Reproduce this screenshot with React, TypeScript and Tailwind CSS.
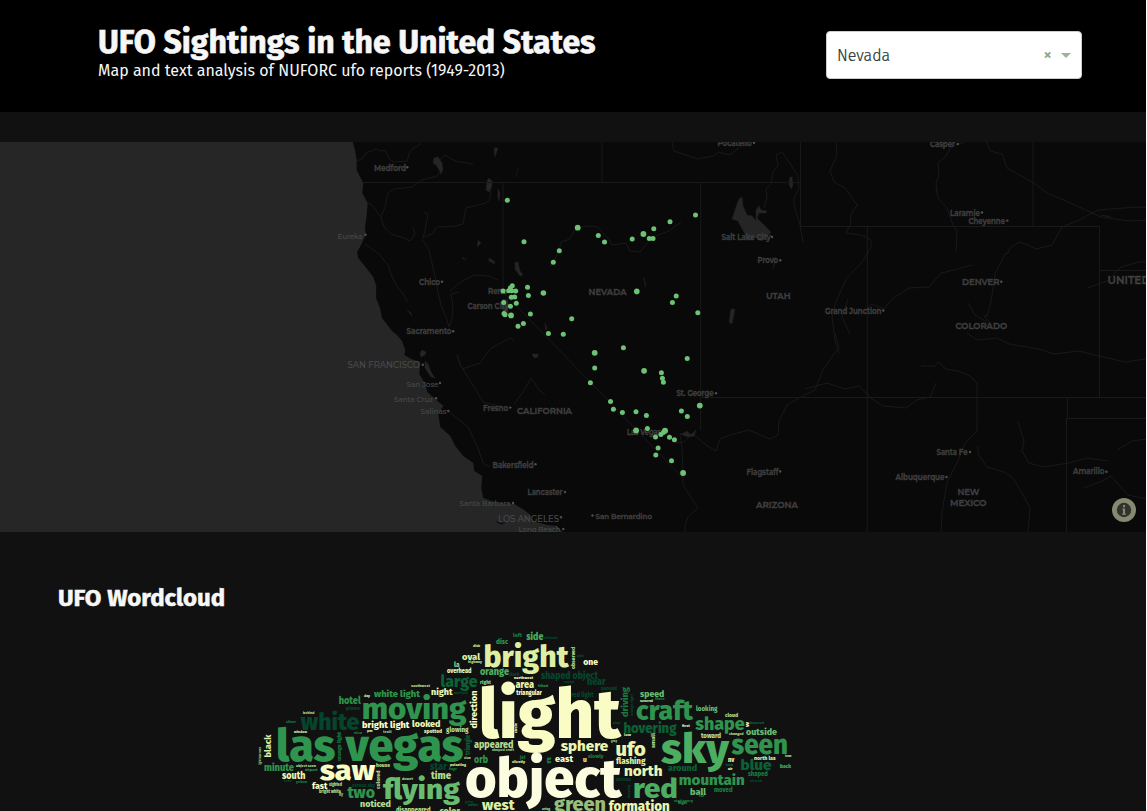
import React from "react";

type Label = [text: string, x: number, baseline: number, width: number, size: number, weight: number];
type Word = [text: string, x: number, baseline: number, width: number, size: number, color: string];

const SIGHTINGS: [number, number, number?][] = [
  [507.3, 200.3], [524, 241.7], [577.7, 227.7, 2.9], [598.3, 235.5], [604.5, 242], [559.3, 250.7], [553.3, 262.3],
  [512.3, 285.7], [510.3, 287.9], [503, 291], [508.7, 290.7], [511.7, 290.7], [515.7, 291], [511.3, 297.2], [514.7, 297],
  [527.5, 287.3], [528.4, 295.4], [543.4, 293, 2.8], [503.7, 302.5], [516.3, 303.3], [510.4, 306.3], [504, 313.5],
  [505, 314.7], [511, 315.4, 2.9], [530.4, 314], [523.4, 323.6], [518, 326.3], [571.7, 318.8], [548.4, 333.5],
  [563.3, 334.2], [695.5, 215], [670, 221.7], [653.8, 228.7], [643.4, 234, 2.9], [649.3, 238.5], [653, 238.5], [632.2, 239],
  [636.8, 291.4, 2.8], [676.2, 296], [672.4, 302.6], [697.8, 312.7], [594.7, 352.8, 2.9], [594.7, 368], [590.4, 382.8],
  [623.4, 347.8], [687.2, 358.6], [644.1, 370.8, 2.9], [661.4, 372.7], [662.4, 378.3], [663.4, 382.3], [610.5, 401.5],
  [613.4, 409.3], [622.4, 412.4], [636, 411.8], [646.4, 415.4], [681.4, 411.1], [687.3, 416.5], [699.8, 405.6, 2.9],
  [647.4, 428.5], [636.1, 430.5, 2.9], [655.5, 437], [660.9, 434.4], [663.3, 432.5], [665, 430.8, 3], [669.5, 437.2],
  [674.4, 439.8], [658.1, 448], [655.8, 455], [671.5, 460.8], [683.1, 473, 2.9],
];

const LABELS: Label[] = [
  ["Medford", 374, 171, 32, 8.2, 600], ["Eureka", 337.5, 238.5, 25, 7.8, 500], ["Chico", 419, 285, 21, 8.2, 600],
  ["Reno", 488, 293.5, 19, 8.2, 600], ["Carson City", 467.5, 309.3, 41, 8.2, 600], ["Sacramento", 406.5, 334.3, 45, 8.2, 600],
  ["SAN FRANCISCO", 347.5, 368.3, 72.5, 8.6, 500], ["San Jose", 406.5, 386.5, 32, 8, 500], ["Santa Cruz", 394, 401.5, 39, 7.8, 500],
  ["Salinas", 420.5, 414, 26, 7.8, 500], ["Fresno", 483, 411, 25, 8.2, 600], ["CALIFORNIA", 517, 413.5, 55, 9.2, 600],
  ["Bakersfield", 492.5, 467.7, 41, 8.2, 600], ["Lancaster", 527.5, 495, 35, 8.2, 600], ["Santa Barbara", 459.5, 506, 51, 7.8, 500],
  ["LOS ANGELES", 498, 521.5, 61, 9, 500], ["Long Beach", 518.5, 532.3, 42, 8, 500], ["San Bernardino", 595.5, 519, 56.5, 8, 600],
  ["NEVADA", 588.5, 294.5, 38, 9.2, 600], ["UTAH", 766, 298.7, 24.5, 9.2, 600], ["Pocatello", 717.5, 146, 34, 8.2, 600],
  ["Salt Lake City", 721.5, 240.3, 49, 8.4, 600], ["Provo", 757.5, 262.8, 20.5, 8.2, 600], ["Grand Junction", 825, 313.5, 56.5, 8.2, 600],
  ["St. George", 676.5, 396.2, 37, 8.2, 600], ["Las Vegas", 627, 435.2, 34, 8.2, 600], ["Flagstaff", 746.5, 474.5, 32, 8.2, 600],
  ["ARIZONA", 756, 507.7, 42, 9.2, 600], ["Casper", 930, 147, 25, 8.2, 600], ["Laramie", 950, 215.5, 30, 8.2, 600],
  ["Cheyenne", 968.5, 223.5, 36.5, 8.2, 600], ["DENVER", 962, 284.5, 37.5, 9, 600], ["COLORADO", 955.5, 328.5, 51.5, 9.2, 600],
  ["UNITED STATES", 1107.5, 283.7, 86, 10.6, 600], ["Santa Fe", 936.5, 455, 31, 8.2, 600], ["Albuquerque", 895.5, 479.7, 49, 8.2, 600],
  ["NEW", 957.5, 494.7, 22, 9.2, 600], ["MEXICO", 950, 505.5, 36.5, 9.2, 600], ["Amarillo", 1073, 474.3, 31.5, 8.2, 600],
];

const CITY_DOTS: [number, number][] = [
  [407.3, 167.3], [365.5, 234.8], [442, 281.7], [453.2, 331.3], [422.8, 364.8], [440, 383], [436, 398.3], [448.3, 411],
  [510.3, 407.6], [535.5, 464.2], [565, 492], [513, 503], [561, 517.2], [563.3, 529], [592.5, 515.5], [754, 142.8],
  [772, 237], [780.3, 260.2], [883.3, 310.5], [716, 393.3], [780.2, 471.5], [957.8, 144], [982, 212.5], [1007.3, 220.6],
  [1001.3, 281.7], [970, 452], [946.5, 477], [1106.5, 471.8],
];

const C = {
  cream: "#fcfde0", pale: "#f9fcc4", yellow: "#eaf5b0", lime: "#dcefa4", light: "#b4dd91", sage: "#8ccc83",
  mint: "#68bc70", grass: "#4cae60", green: "#2f944d", forest: "#187a40", deep: "#0b6136", dark: "#05452d",
};

const WORDS: Word[] = [
  ["light", 478.7, 738, 142, 68, C.pale], ["object", 465, 796.8, 156.5, 55, C.cream], ["las vegas", 276, 761, 187.5, 45, C.green],
  ["sky", 661, 762.7, 68, 42, C.grass], ["seen", 731.5, 754, 56.5, 28, C.green], ["bright", 483.5, 666.7, 85, 30, C.lime],
  ["craft", 636, 720, 57, 27, C.green], ["moving", 361.7, 719, 105, 31, C.green], ["white", 300.7, 729.7, 58.7, 23.5, C.dark],
  ["saw", 319.7, 780, 55.6, 28.5, C.pale], ["flying", 383, 798.7, 77, 28, C.mint], ["red", 633, 797.7, 45, 27, C.grass],
  ["ufo", 615.5, 755.7, 30.3, 20.5, C.yellow], ["shape", 695.2, 730, 49.6, 18, C.green], ["mountain", 678.8, 785, 66, 15, C.green],
  ["blue", 740.5, 770, 31, 15, C.deep], ["hovering", 623.5, 733, 53, 14.5, C.deep], ["north", 624, 776, 38.6, 14.2, C.yellow],
  ["formation", 608.7, 811, 61, 14.8, C.yellow], ["green", 554, 811, 52, 19.5, "#98bd7a"], ["west", 482, 809.5, 32.6, 15, C.lime],
  ["sphere", 560.7, 750.7, 47.5, 14, C.yellow], ["large", 440.6, 686.7, 37, 15.5, C.deep], ["two", 347.4, 798, 27.5, 16, C.green],
  ["appeared", 474, 748.3, 39.5, 10, C.light], ["orb", 474, 763, 14, 10, C.green], ["east", 555, 762, 18, 9.5, C.pale],
  ["u", 583, 762, 3.8, 7, C.lime], ["slowly", 588, 758, 15.5, 6, C.forest], ["orange", 480, 675, 29, 10, C.grass],
  ["oval", 462, 660, 18, 9.5, C.lime], ["la", 454, 667, 5.5, 7.5, C.sage], ["overhead", 447, 673, 24.5, 6.5, C.yellow],
  ["disc", 496, 644, 12, 7.6, C.green], ["left", 513, 637, 9, 5, C.forest], ["side", 526.3, 640, 17, 10, C.grass],
  ["altitude", 544, 639, 14, 3.5, C.dark], ["one", 583.3, 665, 14.7, 9.5, C.pale], ["shaped object", 541, 679.3, 57, 10.5, C.dark],
  ["near", 587, 685, 18.7, 10.5, C.dark], ["second", 601, 689.5, 16, 5, C.dark], ["red light", 571, 697, 22.5, 7.5, C.dark],
  ["area", 515.5, 688, 18.5, 10, C.yellow], ["triangular", 516.3, 694.8, 25.5, 6.8, C.pale], ["tilted", 538, 687, 10, 3.2, C.green],
  ["northwest", 514, 678.5, 19, 3.5, C.pale], ["dark", 509, 676, 10.5, 6, C.dark], ["right", 480, 684, 11, 5.5, C.sage],
  ["night", 431, 695, 21.5, 9.5, C.yellow], ["multiple", 454, 694, 14, 4, C.dark], ["disk", 473, 647, 7, 3.4, C.lime],
  ["highway", 468, 663, 14, 3.5, C.light], ["pink", 577, 657, 7, 3, C.dark], ["round", 564, 683, 10, 3, C.dark],
  ["white light", 374, 697, 46, 9.5, C.green], ["southwest", 411, 687, 19, 3.5, C.light], ["day", 364, 697, 6, 3.8, C.lime],
  ["hotel", 338.7, 704, 22, 10, C.green], ["plane", 346, 710, 14, 6, C.dark], ["bright light", 362, 728, 47.5, 9.6, C.pale],
  ["looked", 412, 727, 28.5, 9.6, C.yellow], ["spotted", 424, 732.5, 18, 5.2, C.yellow], ["glowing", 446, 732, 22.5, 7.4, C.light],
  ["behind", 303, 714, 11.5, 3.7, C.light], ["silver", 286, 723, 10, 4, C.forest], ["window", 294, 733, 13, 3.7, C.lime],
  ["view", 354, 734, 8, 4, C.forest], ["pm", 367, 732, 5.5, 4, C.lime], ["trail", 383, 733, 8.5, 4, C.sage],
  ["minute", 264, 771, 30, 10, C.green], ["object seen", 296, 767, 20, 3.7, C.light], ["airport", 305, 770.5, 12.5, 4, C.green],
  ["south", 282, 779, 23.3, 10, C.yellow], ["house", 376, 767, 14, 6, C.light], ["fast", 312, 789, 15.5, 9.5, C.pale],
  ["home", 284, 782, 8, 3.5, C.dark], ["yellow", 296, 783, 11, 4, C.forest], ["sighted", 329, 785.5, 13, 4.4, C.light],
  ["across sky", 352, 787, 23, 5.6, C.dark], ["bright white", 319, 792.5, 22, 4.4, C.light], ["fly", 339, 796, 4, 4.5, C.sage],
  ["noticed", 360, 807, 31, 9.5, C.light], ["disappeared", 396, 812, 34.5, 7.6, C.light], ["desert", 402, 780, 11, 3.8, C.light],
  ["color", 439.5, 813.5, 20.5, 9.5, C.light], ["time", 431, 779, 20, 10, C.light], ["star", 430, 770, 17, 10, C.dark],
  ["pulsating", 450, 766, 16, 3.7, C.lime], ["huge", 449, 770, 8, 3.6, C.forest], ["slow", 464, 759, 6.5, 3.6, C.light],
  ["shaped craft", 492, 751, 22, 3.6, C.sage], ["silently", 512, 763, 13, 4, C.lime], ["jet", 520, 758.5, 5.5, 5, C.forest],
  ["going", 465, 803, 8, 3.5, C.dark], ["another", 468, 806, 10, 3.5, C.deep], ["oring", 542, 810, 8, 3.6, C.light],
  ["speed", 640, 697, 24.3, 9.2, C.mint], ["several", 640, 702, 13, 3.8, C.lime], ["flashing", 616, 764, 29.5, 8, C.lime],
  ["looking", 696, 711, 21.5, 7.8, C.mint], ["cloud", 725, 717, 13, 5, C.light], ["hovered", 750, 724, 14, 4, C.deep],
  ["changed", 729, 735, 14.5, 4, C.light], ["outside", 746, 735, 31, 9, C.mint], ["toward", 701, 738, 20, 6.8, C.light],
  ["first", 682, 727, 8, 3.8, C.lime], ["gray", 611, 742, 6, 3.4, C.sage], ["star", 613, 724, 8, 4, C.dark], ["low", 624, 736, 7, 3.5, C.lime],
  ["around", 668, 771, 29, 9.2, C.deep], ["nv", 728, 762, 6.3, 7, C.yellow], ["air", 728, 770, 4.5, 3.8, C.pale], ["beam", 726, 766, 7, 3.2, C.deep],
  ["north las", 754, 760, 21.5, 5.4, C.lime], ["town", 785, 757, 6.5, 3.5, C.light], ["back", 780, 768, 11, 5.2, C.grass],
  ["shaped", 748, 775.5, 19.8, 6.8, C.forest], ["streak", 750, 782, 12, 3.6, C.dark], ["moved", 714, 792, 18.5, 7, C.forest],
  ["ball", 690, 795, 16, 9.6, C.mint], ["far", 699, 797, 5.5, 3.5, C.forest], ["across", 616, 781, 15, 5, C.dark],
  ["stationary", 674, 801.5, 19, 4.2, C.forest], ["flight", 678, 804, 9, 3.6, C.green], ["flare", 655, 700, 10, 4, C.forest],
];

const VERTICAL_WORDS: Word[] = [
  ["black", 271, 757.5, 23, 9, C.lime], ["light blue seen", 261, 765, 18, 3.5, C.light], ["orange light", 340.5, 761, 29, 6, C.forest],
  ["colored", 380, 789, 18.5, 5.5, C.light], ["direction", 477.3, 728.5, 38, 9, C.pale], ["triangle", 470, 755, 20, 6.2, C.deep],
  ["circle", 517, 733, 10, 4, C.pale], ["observed", 575, 669, 22, 5.2, C.light], ["fl", 550.5, 764, 7, 6, C.forest],
  ["driving", 627.5, 717, 30, 9, C.forest], ["orange light", 632.5, 716, 22, 3.6, C.dark], ["small", 654.8, 748, 15, 6, C.light],
  ["moving", 629.5, 798, 13, 4, C.dark], ["w", 749, 727, 5, 5, C.pale],
];

const RIVERS = [
  "M357 161l6-3 3-5 10-4 5 2 4-1 4 9 5 3 13-1 3-10 10-7V142", "M368 203l5 3 8 11 4-10 3-14 6-4 18-2 10-7 15-4 6-7M440 160l5-5 10 6 18 3",
  "M381 217l3 10 7 7 13 4 6 3 5-7-2-7", "M365 244l14 10 9 11 4 12 4 8 7 9 5 8", "M423 238l2-8 3-16-4-2M423 237l9-3 5-7 19-1 7-2 3-16 20-5 4-4 1-13",
  "M422 239l7 11 3 13 4 18 2 12 3 12 5 12 3 10 3-8 1-12-2-13 8-2", "M450 291l9-8 15-8 15 1 9 4",
  "M550 267l9-16 2-9 9-3 4-8 4-3 10-2 10 1 6 7 6 7 2 4 14-2 4 8 10 1 7-9 11-8 11-4 12-9",
  "M672 142l2 9 24 8 15-3 5-4 12 3 10-8", "M764 208l3-11-1-8 5-5 2-12 5-7-2-10 6-3 7 10 5 8 4 5 0 5 1 9-5 9 0 7 3 10 3 10 3 17",
  "M836 142l1 13-7 16 4 11 11 6 12 17-6 9-1 11-4 8 15 2 10 5 0 7-8 14-17 18-10 23-4 15 3 24 4 12",
  "M937 193l-1-10 3-8-1-12 8-7 6-10 16-5 19 1 3 9 12 3 5 14 27 15 13 10 19 8 35 16 28 4 18-1",
  "M936 187l2 11 9 10 6 17 4 6-1 20", "M867 308l5-4 12 5 8-10 17-11 20-1 12-14 13-3 18-5",
  "M990 323l-6-7 3 0 4-14 4-28 10-20 3-1 2-5 9-6 9 3 8 4 16-4 10-18 17-7 19-10 39-3 19 1",
  "M968 303l7 12 13 8M1087 288l20-7 14-14 18-5 8 0", "M850 334l-8-17 6-18M835 333l4 14-5 7-11 16-8 20-14 7-14 8-8 16-1 14-8 4-21-9-19 5-10 4-4 12-10-6-14-12-8 9-9 1",
  "M805 389l22-6 18 6 14-3 13 13 11 7 23 2 11-8 13-3 6-14", "M921 366h14l3-4 8 7 12 2 12 5 7 7v48l-12 12-8 20-10 19-5 31-1 19-4 11",
  "M967 333l10 7 20-2 12 6 30 5 15 5 25-3 20 5 26 6 20-3 12 2", "M1018 422l6 19-2 10 7 12 14 4 26-4 18-5 21 3",
  "M978 446v8l9 13 17 5 9 6 10 17 7 13-2 24", "M1084 488l18-7 9-5 17 19 19 4M1117 450l15-9 15-2",
  "M680 435l2 13 1 25 0 12 7 11 8 12-10 9-3 8v7", "M448 411l20 16 10 21 5 15 7 4", "M461 367l-4-12 4 11 13 21 9 15 8 2 8 2",
  "M462 369l18-6 10-14 20-11 4 2M514 404l9-12 8-14 9 13 5 4",
];

const LAKES = [
  "M737 204l2-5 3-2 1 9 4 9 5 1 4 5 0-11 3-4 2 4 6 1-1 2-7 0-2 5 6 6 8 8-5 6-5 3-6-4-3 3-5 0-3-8-3-5-3-6-6-2z",
  "M487 181l2-3 3 3v5l-3 6-3-2zM434 158l4-1 4 6 1 6-2 5-4-8-4-3zM494 148l4 0-3 9zM498 189l2 4-1 8-1-4z",
  "M515 262l3 0 2 9 3 4-3 1-5-7zM503 299l5 1 0 15-5-4-2-6z", "M790 177l2 0 1 8-2 4-2-5zM731 309l4 0-3 15-3-2z",
  "M422 350l4 2-1 3-4 2-1-4zM425 361l3 3 3 8 4 6-4-1-6-9z", "M478 240l3 3-4 4M462 257l4 3-3-1M489 258l5 3 1 3-6-3z",
  "M775 257l-2 12 2-7zM532 354l6 0 0 3-4 1zM545 323l2 5-1 3zM644 277l2 10-1-3zM680 434l4-1 3-2 4 4 5-5-2 6-6 1z",
  "M518 167l-2 10M407 310l4 3 1 3zM1101 215l10 2z",
];

const CALIFORNIA_COAST =
  "M352.7 142l2.3 8 1.7 10v10l6.6 13-1 10 5.4 10-1 12-1.7 13 .7 7-5.7 12-3 5 1.3 6 8 10 7 9 3 9-.3 12 4 10 2 10 10 13 5 4 5 6 3.3 9-1 5 7 4 9 3-1 12 6 10 2 8 8 7 8 7-5 8 2 13 10 9 5 10 8 10 10 7 1 8 8 5-1 12 2 10 14 5 17 1 10 6 6 5 2 6 15 4 10 1 4 5 7 3H1146V142z";

function Header() {
  return (
    <header className="flex h-28 justify-between bg-black pt-[23px] pr-16 pl-[98px] text-[#f7f7f7]">
      <div className="w-[520px] whitespace-nowrap">
        <h1 className="text-[32px] leading-[38px] font-bold [-webkit-text-stroke:0.6px_#f7f7f7]">UFO Sightings in the United States</h1>
        <p className="mt-px text-[16px] leading-[18px]">Map and text analysis of NUFORC ufo reports (1949-2013)</p>
      </div>
      <div className="mt-2 flex h-12 w-64 items-center rounded border border-[#ccc] bg-white pr-[10px] pl-[10px]">
        <span className="flex-1 pt-px text-[16px] font-light text-[#1f302f] [-webkit-text-stroke:0.2px_#1f302f]">Nevada</span>
        <button aria-label="Clear" className="w-[9px] text-[16px] leading-none font-semibold text-[#93a690]">×</button>
        <span className="ml-[9px] border-x-[5px] border-t-[5px] border-x-transparent border-t-[#a0b29b]" />
      </div>
    </header>
  );
}

function SightingsMap() {
  return (
    <section className="mt-[30px] h-[390px] overflow-hidden bg-[#262626]">
      <svg viewBox="0 142 1146 390" className="block h-full w-full">
        <path d={CALIFORNIA_COAST} fill="#090909" />
        <path d="M496 521l6 1 4 0-4 3-5-2zM489 518h4z" fill="#141414" />
        <g fill="none" stroke="#191919" strokeWidth="1">
          {RIVERS.map((d) => <path key={d} d={d} />)}
        </g>
        <g fill="#252525" stroke="#212121" strokeWidth="0.5">
          {LAKES.map((d) => <path key={d} d={d} />)}
        </g>
        <path
          d="M363 182.5H801M602 142V182M503 182V292L683 478M700.7 182V430M700 397.5H1146M800.5 142V226.5H1099.5V397M867.3 226V532M1033 142V226M1099 270.5H1146M1067.5 397V418.5H1146M1066.5 418V532"
          fill="none" stroke="#191919"
        />
        {LABELS.map(([text, x, y, width, size, weight]) => (
          <text key={text} x={x} y={y} textLength={width} lengthAdjust="spacingAndGlyphs" fontSize={size} fontWeight={weight} fill={weight === 500 ? "#4b4b4b" : "#434343"} stroke="#3a3a3a" strokeWidth={weight === 500 ? 0.1 : 0.4} fontFamily="Montserrat, Inter, 'Noto Sans', sans-serif">
            {text}
          </text>
        ))}
        {CITY_DOTS.map(([x, y]) => <circle key={`${x}-${y}`} cx={x} cy={y} r="1.2" fill="#505050" />)}
        {SIGHTINGS.map(([x, y, r = 2.5]) => <circle key={`${x}-${y}`} cx={x} cy={y} r={r} fill="#6dc375" />)}
        <circle cx="1124" cy="510" r="12" fill="#868970" />
        <circle cx="1124" cy="510" r="7.2" fill="#32332d" />
        <path d="M1123 505h2v2.2h-2zM1122.4 508.4h2.6v5h.8v1.4h-3.6v-1.4h.8v-3.6h-.6z" fill="#868970" />
      </svg>
    </section>
  );
}

function CloudWord({ word, vertical }: { word: Word; vertical?: boolean }) {
  const [text, x, y, width, size, color] = word;
  return (
    <text
      x={vertical ? undefined : x}
      y={vertical ? undefined : y}
      transform={vertical ? `translate(${x} ${y}) rotate(-90)` : undefined}
      textLength={width}
      lengthAdjust="spacingAndGlyphs"
      fontSize={size}
      fill={color}
    >
      {text}
    </text>
  );
}

function Wordcloud() {
  return (
    <section className="h-[279px] overflow-hidden pt-[50px]">
      <h2 className="ml-[58px] h-[32px] text-[24px] leading-[32px] font-bold text-[#f7f7f7] [-webkit-text-stroke:0.5px_#f7f7f7]">UFO Wordcloud</h2>
      <svg viewBox="0 614 1146 197" className="block h-[197px] w-full" fontWeight="800">
        {WORDS.map((word) => <CloudWord key={`${word[0]}-${word[1]}`} word={word} />)}
        {VERTICAL_WORDS.map((word) => <CloudWord key={`${word[0]}-${word[1]}`} word={word} vertical />)}
      </svg>
    </section>
  );
}

export default function App() {
  return (
    <div className="h-[811px] overflow-hidden bg-white pr-px font-['Fira_Sans','Noto_Sans',sans-serif]">
      <main className="h-full bg-[#111]">
        <Header />
        <SightingsMap />
        <Wordcloud />
      </main>
    </div>
  );
}
